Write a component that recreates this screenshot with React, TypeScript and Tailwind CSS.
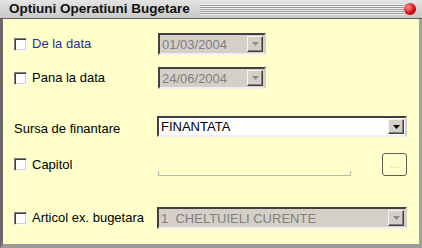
import { clsx } from 'clsx'

function Check() {
  return (
    <div className="box-border h-[13px] w-[13px] shrink-0 border border-t-[#808080] border-l-[#808080] border-r-white border-b-white bg-white shadow-[inset_1px_1px_0_#404040,inset_-1px_-1px_0_#d4d0c8]" />
  )
}

function Arrow({ disabled }: { disabled?: boolean }) {
  return (
    <div className="box-border flex h-full w-[16px] shrink-0 items-center justify-center border border-t-[#f4f4f4] border-l-[#f4f4f4] border-r-[#404040] border-b-[#404040] bg-[#d4d0c8] shadow-[inset_-1px_-1px_0_#808080]">
      <svg width="7" height="4" viewBox="0 0 7 4">
        <path d="M0 0h7L3.5 4z" fill={disabled ? '#8a8a8a' : '#000'} />
      </svg>
    </div>
  )
}

function Combo({ value, disabled, className }: { value: string; disabled?: boolean; className: string }) {
  return (
    <div
      className={clsx(
        'box-border flex items-stretch border-2 border-t-[#404040] border-l-[#404040] border-r-[#d4d0c8] border-b-[#f0f0f0] p-px pl-[2px]',
        disabled ? 'bg-[#d4d0c8] text-[#808080]' : 'bg-white text-black',
        className,
      )}
    >
      <span className="flex-1 self-center overflow-hidden whitespace-pre leading-none">{value}</span>
      <Arrow disabled={disabled} />
    </div>
  )
}

export default function App() {
  return (
    <div
      className="box-border flex h-[248px] w-[422px] flex-col overflow-hidden bg-[#ffffcc] text-[13px] text-black"
      style={{ fontFamily: '"Liberation Sans", Arial, sans-serif' }}
    >
      <div className="flex h-[19px] shrink-0 items-center border-b border-[#5c5c5c] bg-gradient-to-b from-[#e4e4e4] to-[#c8c8c8] pl-[9px] pr-[6px]">
        <span className="text-[13.5px] font-bold leading-none text-[#111]">Optiuni Operatiuni Bugetare</span>
        <div className="ml-[10px] h-[11px] flex-1 bg-[repeating-linear-gradient(to_bottom,#f2f2f2_0px,#f2f2f2_1px,#9c9c9c_1px,#9c9c9c_2px)]" />
        <div className="h-[12px] w-[12px] rounded-full bg-[radial-gradient(circle_at_35%_35%,#ff9090,#d01010_55%,#7a0000)]" />
      </div>
      <div className="flex flex-1 flex-col border-b-[4px] border-l-[3px] border-r-[3px] border-b-[#9a9a9a] border-l-[#6a6a6a] border-r-[#a0a0a0] pl-[11px] pr-[12px] pt-[14px]">
        <div className="flex h-[22px] items-center">
          <div className="flex w-[144px] items-center gap-[5px]">
            <Check />
            <span className="text-[#2d2d9a]">De la data</span>
          </div>
          <Combo value="01/03/2004" disabled className="h-[22px] w-[108px]" />
        </div>
        <div className="mt-[12px] flex h-[22px] items-center">
          <div className="flex w-[144px] items-center gap-[5px]">
            <Check />
            <span>Pana la data</span>
          </div>
          <Combo value="24/06/2004" disabled className="h-[22px] w-[108px]" />
        </div>
        <div className="mt-[27px] flex h-[21px] items-center">
          <span className="w-[143px] pt-[4px]">Sursa de finantare</span>
          <Combo value="FINANTATA" className="h-[21px] flex-1" />
        </div>
        <div className="mt-[16px] flex h-[23px] items-center">
          <div className="flex w-[144px] items-center gap-[5px]">
            <Check />
            <span>Capitol</span>
          </div>
          <div className="h-[5px] w-[193px] self-end border-x border-b border-[#b8b8a8]" />
          <div className="ml-[31px] flex h-[23px] w-[25px] items-center justify-center rounded-[3px] border border-[#5e5e50] text-[10px] leading-none text-[#c8c8b0]">
            ...
          </div>
        </div>
        <div className="mt-[31px] flex h-[22px] items-center">
          <div className="flex w-[143px] items-center gap-[5px]">
            <Check />
            <span>Articol ex. bugetara</span>
          </div>
          <Combo value="1  CHELTUIELI CURENTE" disabled className="h-[22px] flex-1" />
        </div>
      </div>
    </div>
  )
}
